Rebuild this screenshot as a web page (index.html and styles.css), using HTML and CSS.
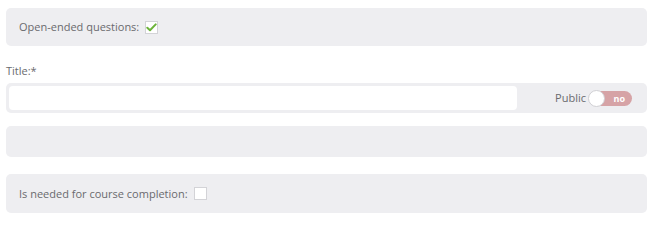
FILE: index.html
```html
<!DOCTYPE html>
<html>
<head>
<meta charset="utf-8">
<link rel="stylesheet" href="styles.css">
</head>
<body>
<div class="form">
  <div class="panel panel-tall">
    <span class="label">Open-ended questions:</span>
    <span class="checkbox checked">
      <svg width="11" height="9" viewBox="0 0 11 9"><path d="M1.3 4.7 L4 7.2 L9.7 1.4" fill="none" stroke="#6cb33a" stroke-width="2" stroke-linecap="round" stroke-linejoin="round"/></svg>
    </span>
  </div>
  <div class="field-label">Title:*</div>
  <div class="panel panel-row">
    <div class="input"></div>
    <div class="public">
      <span class="label">Public</span>
      <span class="toggle"><span class="knob"></span><span class="toggle-text">no</span></span>
    </div>
  </div>
  <div class="panel panel-empty"></div>
  <div class="panel panel-last">
    <span class="label">Is needed for course completion:</span>
    <span class="checkbox"></span>
  </div>
</div>
</body>
</html>
```
FILE: styles.css
```css
html, body {
  margin: 0;
  padding: 0;
  background: #ffffff;
}
body {
  font-family: "Open Sans", "DejaVu Sans", sans-serif;
  font-size: 11px;
  color: #6a6a6e;
}
.form {
  width: 641px;
  padding: 8px 0 0 6px;
  display: flex;
  flex-direction: column;
}
.panel {
  background: #eeeef1;
  border-radius: 5px;
  display: flex;
  align-items: center;
  box-sizing: border-box;
}
.panel-tall {
  height: 38px;
  padding-left: 13px;
  gap: 6px;
}
.label {
  line-height: 16px;
}
.checkbox {
  width: 11px;
  height: 11px;
  border: 1px solid #d3d3d7;
  background: #fff;
  display: inline-flex;
  align-items: center;
  justify-content: center;
}
.field-label {
  margin-top: 17px;
  line-height: 16px;
  height: 16px;
  margin-bottom: 4px;
}
.panel-row {
  height: 30px;
  padding: 3px;
  justify-content: space-between;
}
.input {
  width: 508px;
  height: 24px;
  background: #fff;
  border-radius: 4px;
}
.public {
  display: flex;
  align-items: center;
  gap: 3px;
  margin-right: 12px;
}
.toggle {
  position: relative;
  width: 43px;
  height: 15px;
  border-radius: 8px;
  background: #d6a3a6;
  display: flex;
  align-items: center;
  justify-content: flex-end;
  padding-right: 7px;
  box-sizing: border-box;
}
.knob {
  position: absolute;
  left: -1px;
  top: -1px;
  width: 15px;
  height: 15px;
  border-radius: 50%;
  background: #fff;
  border: 1px solid #d0d0d4;
}
.toggle-text {
  color: #fff;
  font-weight: 700;
  font-size: 9px;
  line-height: 15px;
}
.panel-empty {
  margin-top: 13px;
  height: 31px;
}
.panel-last {
  margin-top: 17px;
  height: 39px;
  padding-left: 13px;
  gap: 6px;
}
```
